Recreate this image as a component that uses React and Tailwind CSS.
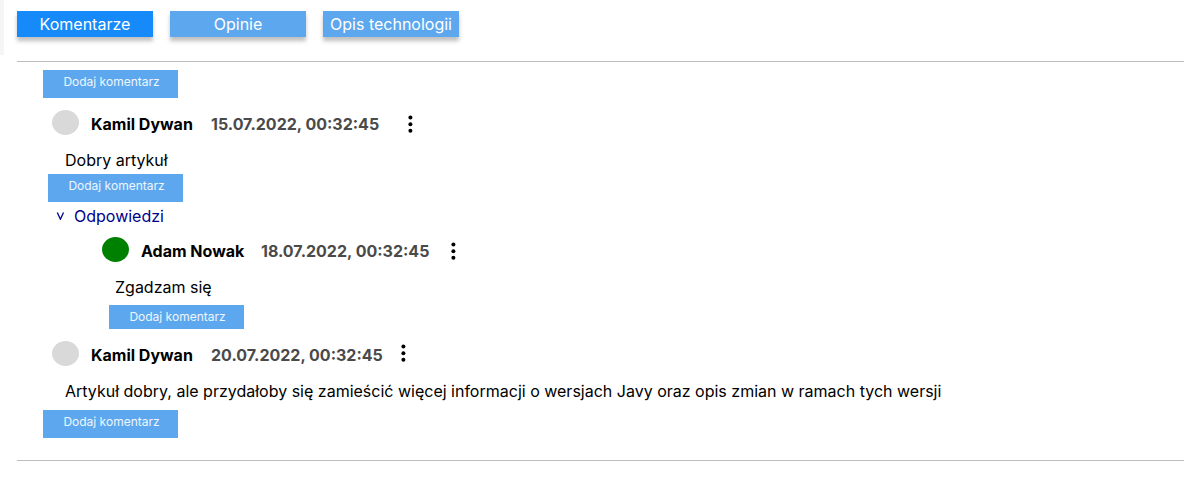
import { useState } from 'react';

const TABS = ['Komentarze', 'Opinie', 'Opis technologii'];

function Tab({ label, active, onClick }) {
  return (
    <button
      type="button"
      role="tab"
      aria-selected={active}
      onClick={onClick}
      className={`h-[26px] w-[136px] whitespace-nowrap text-center text-base leading-[26px] text-white shadow-[0_4px_4px_rgba(0,0,0,0.25)] ${
        active ? 'bg-[#168af8]' : 'bg-[#5ca7ee]'
      }`}
    >
      {label}
    </button>
  );
}

function AddComment({ className }) {
  return (
    <button
      type="button"
      className={`block w-[135px] bg-[#5ca7ee] pl-0.5 text-center text-xs leading-6 text-white/90 ${className}`}
    >
      Dodaj komentarz
    </button>
  );
}

function CommentHeader({ author, date, avatar, dateWidth, menuAlign }) {
  return (
    <header className="flex h-[26px] items-end text-base font-bold leading-6">
      <span className={`mr-3 h-[25px] w-[27px] shrink-0 self-start rounded-[50%] ${avatar}`} />
      <span className="w-[120px] shrink-0">{author}</span>
      <time className={`shrink-0 text-[#4a4a4a] ${dateWidth}`}>{date}</time>
      <button type="button" aria-label="Opcje komentarza" className={`h-6 w-6 shrink-0 ${menuAlign}`}>
        <svg viewBox="0 0 24 24" className="block h-6 w-6" fill="black" aria-hidden="true">
          <circle cx="12.4" cy="5.6" r="2" />
          <circle cx="12.4" cy="12.2" r="2" />
          <circle cx="12.4" cy="18.8" r="2" />
        </svg>
      </button>
    </header>
  );
}

function CommentText({ children }) {
  return <p className="mt-3 pl-[13px] text-base leading-6">{children}</p>;
}

export default function App() {
  const [tab, setTab] = useState(0);
  const [open, setOpen] = useState(true);

  return (
    <div className="flex items-start bg-white font-['Inter',sans-serif] text-black">
      <div className="h-[55px] w-1 shrink-0 bg-[#f5f5f5]" />
      <main className="min-w-0 grow pl-[13px] pt-[11px]">
        <div role="tablist" className="flex gap-[17px]">
          {TABS.map((label, i) => (
            <Tab key={label} label={label} active={i === tab} onClick={() => setTab(i)} />
          ))}
        </div>

        <section className="mt-6 border-y border-[#bdbdbd] pb-[22px] pl-[26px] pt-2">
          <AddComment className="h-7 pb-1" />

          <article className="mt-3 pl-[9px]">
            <CommentHeader
              author="Kamil Dywan"
              date="15.07.2022, 00:32:45"
              avatar="bg-[#d9d9d9]"
              dateWidth="w-[187px]"
              menuAlign="self-end"
            />
            <CommentText>Dobry artykuł</CommentText>
            <AddComment className="-ml-1 mt-0.5 h-7 pb-1" />
            <button
              type="button"
              aria-expanded={open}
              onClick={() => setOpen(!open)}
              className="mt-0.5 flex items-center pl-1 text-base leading-6 text-[#00008b]"
            >
              <svg viewBox="0 0 9 8" className="mr-[9px] h-2 w-[9px]" fill="none" stroke="currentColor" strokeWidth="1.3" aria-hidden="true">
                <path d="M1.3 0.5 L4.4 7.2 L7.5 0.5" />
              </svg>
              Odpowiedzi
            </button>

            {open && (
              <article className="mt-[9px] pl-[50px]">
                <CommentHeader
                  author="Adam Nowak"
                  date="18.07.2022, 00:32:45"
                  avatar="bg-[#008000]"
                  dateWidth="w-[180px]"
                  menuAlign="self-end"
                />
                <CommentText>Zgadzam się</CommentText>
                <AddComment className="ml-[7px] mt-1.5 h-6" />
              </article>
            )}
          </article>

          <article className="mt-3 pl-[9px]">
            <CommentHeader
              author="Kamil Dywan"
              date="20.07.2022, 00:32:45"
              avatar="bg-[#d9d9d9]"
              dateWidth="w-[180px]"
              menuAlign="self-start"
            />
            <CommentText>
              Artykuł dobry, ale przydałoby się zamieścić więcej informacji o wersjach Javy oraz opis zmian w ramach tych wersji
            </CommentText>
          </article>
          <AddComment className="mt-[7px] h-7 pb-1" />
        </section>
      </main>
    </div>
  );
}
